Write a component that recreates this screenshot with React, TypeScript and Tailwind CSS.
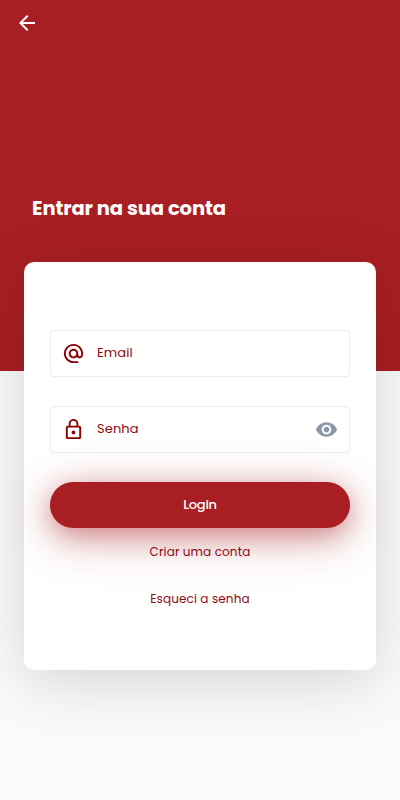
import { useState } from "react";
import {
  MdAlternateEmail,
  MdArrowBack,
  MdLockOutline,
  MdVisibility,
} from "react-icons/md";

function InputField(props: any) {
  const { icon, label, type, children } = props;

  return (
    <div className="flex h-[47px] items-center rounded border border-[#ececee] pl-[11px] pr-[11px]">
      {icon}
      <input
        type={type}
        placeholder={label}
        aria-label={label}
        className="ml-3 min-w-0 flex-1 bg-transparent pb-[2px] text-[13px] tracking-[0.1px] text-[#900810] outline-none placeholder:text-[#900810] placeholder:opacity-100"
      />
      {children}
    </div>
  );
}

export default function App() {
  const [showPassword, setShowPassword] = useState(false);

  return (
    <div className="min-h-[800px] overflow-hidden bg-[#fafafa] font-['Poppins','Inter',sans-serif]">
      <header className="h-[371px] bg-[#a81e22]">
        <button type="button" aria-label="Voltar" className="block pl-[15px] pt-[11px]">
          <MdArrowBack className="size-6 text-white" />
        </button>
        <h1 className="mt-[158px] pl-8 text-[19.5px] leading-[32px] font-bold tracking-[-0.12px] text-white">
          Entrar na sua conta
        </h1>
      </header>
      <form
        onSubmit={(e) => e.preventDefault()}
        className="relative mx-6 mt-[-109px] h-[408px] rounded-[10px] bg-white px-[26px] pt-[68px] shadow-[0_12px_60px_rgba(0,0,0,0.15)]"
      >
        <InputField
          type="email"
          label="Email"
          icon={<MdAlternateEmail className="size-[23px] shrink-0 text-[#8b0000]" />}
        />
        <div className="h-[29px]" />
        <InputField
          type={showPassword ? "text" : "password"}
          label="Senha"
          icon={<MdLockOutline className="size-[23px] shrink-0 text-[#8b0000]" />}
        >
          <button
            type="button"
            aria-label="Mostrar senha"
            onClick={() => setShowPassword(!showPassword)}
          >
            <MdVisibility className="size-[23px] text-[#8c98a9]" />
          </button>
        </InputField>
        <button
          type="submit"
          className="mt-[29px] block h-[46px] w-full rounded-full bg-[#a81e22] text-[13px] font-medium tracking-[-0.25px] text-white shadow-[0_10px_50px_rgba(168,30,34,0.3),0_7px_24px_rgba(168,30,34,0.4)]"
        >
          Login
        </button>
        <div className="relative mt-[14px] flex flex-col items-center gap-[27px] text-[12px] leading-5 tracking-[0.12px] text-[#900810]">
          <button type="button">Criar uma conta</button>
          <button type="button">Esqueci a senha</button>
        </div>
      </form>
    </div>
  );
}
